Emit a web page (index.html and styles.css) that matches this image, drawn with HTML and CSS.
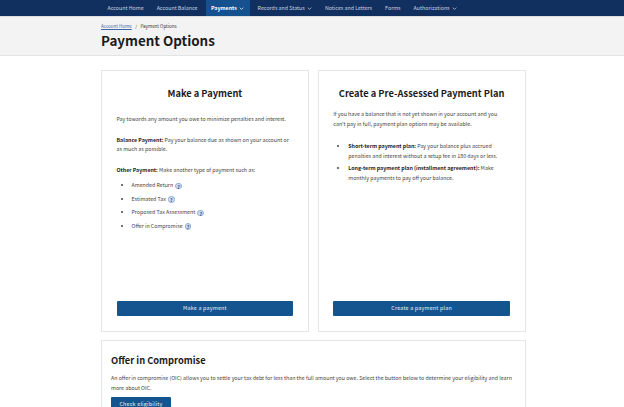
FILE: index.html
```html
<!DOCTYPE html>
<html lang="en">
<head>
<meta charset="utf-8">
<title>Payment Options</title>
<link rel="stylesheet" href="styles.css">
</head>
<body>
<nav class="nav">
  <a class="nav-item">Account Home</a>
  <a class="nav-item">Account Balance</a>
  <a class="nav-item active">Payments <svg class="chev" viewBox="0 0 8 5"><path d="M1 1l3 3 3-3" fill="none" stroke="currentColor" stroke-width="1.2"/></svg></a>
  <a class="nav-item">Records and Status <svg class="chev" viewBox="0 0 8 5"><path d="M1 1l3 3 3-3" fill="none" stroke="currentColor" stroke-width="1.2"/></svg></a>
  <a class="nav-item">Notices and Letters</a>
  <a class="nav-item">Forms</a>
  <a class="nav-item">Authorizations <svg class="chev" viewBox="0 0 8 5"><path d="M1 1l3 3 3-3" fill="none" stroke="currentColor" stroke-width="1.2"/></svg></a>
</nav>
<header class="head">
  <div class="crumbs"><a class="crumb-link">Account Home</a><span class="sep">/</span><span>Payment Options</span></div>
  <h1>Payment Options</h1>
</header>
<main class="main">
  <div class="cols">
    <section class="card">
      <h2>Make a Payment</h2>
      <p class="intro">Pay towards any amount you owe to minimize penalties and interest.</p>
      <p class="para"><b>Balance Payment:</b> Pay your balance due as shown on your account or as much as possible.</p>
      <p class="para"><b>Other Payment:</b> Make another type of payment such as:</p>
      <ul class="help-list">
        <li>Amended Return <span class="q">?</span></li>
        <li>Estimated Tax <span class="q">?</span></li>
        <li>Proposed Tax Assessment <span class="q">?</span></li>
        <li>Offer in Compromise <span class="q">?</span></li>
      </ul>
      <a class="btn wide">Make a payment</a>
    </section>
    <section class="card">
      <h2>Create a Pre-Assessed Payment Plan</h2>
      <p class="intro2">If you have a balance that is not yet shown in your account and you can't pay in full, payment plan options may be available.</p>
      <ul class="plan-list">
        <li><b>Short-term payment plan:</b> Pay your balance plus accrued penalties and interest without a setup fee in 180 days or less.</li>
        <li><b>Long-term payment plan (installment agreement):</b> Make monthly payments to pay off your balance.</li>
      </ul>
      <a class="btn wide">Create a payment plan</a>
    </section>
  </div>
  <section class="card oic">
    <h3>Offer in Compromise</h3>
    <p class="oic-text">An offer in compromise (OIC) allows you to settle your tax debt for less than the full amount you owe. Select the button below to determine your eligibility and learn more about OIC.</p>
    <a class="btn small">Check eligibility</a>
  </section>
</main>
</body>
</html>
```
FILE: styles.css
```css
* { box-sizing: border-box; }
html, body { margin: 0; padding: 0; height: 100%; overflow: hidden; }
body {
  background: #fff;
  color: #444;
  font-family: "Noto Sans CJK SC", "Noto Sans", sans-serif;
  font-size: 5.3px;
  line-height: 9.6px;
}
b { font-weight: 700; color: #222; }
.nav {
  height: 17px;
  background: #11305f;
  display: flex;
  padding-left: 101px;
  color: #c9d3e3;
  font-size: 5.3px;
  line-height: 16px;
  border-bottom: 1px solid #dcdcdc;
}
.nav-item {
  padding: 0 6.5px;
  white-space: nowrap;
}
.nav-item.active {
  background: #15508f;
  color: #fff;
  font-weight: 700;
  padding: 0 5.5px;
  margin: 0 1.5px;
}
.chev { width: 5px; height: 3px; margin-left: 1px; vertical-align: 0; }
.head {
  background: #f3f3f3;
  height: 39px;
  padding: 5.5px 0 0 101px;
  border-bottom: 1px solid #e4e4e4;
}
.crumbs { font-size: 4.5px; line-height: 7px; color: #333; }
.crumb-link { color: #3b66a8; text-decoration: underline; }
.sep { margin: 0 3.5px; }
h1 {
  margin: 1.5px 0 0;
  font-size: 13.4px;
  line-height: 18px;
  font-weight: 700;
  color: #1b1b1b;
}
.main { padding: 14px 98.5px 0 101px; }
.cols { display: flex; gap: 9px; }
.card {
  background: #fff;
  border: 1px solid #e6e6e6;
  flex: 1;
  height: 262px;
  padding: 0 14.5px;
  display: flex;
  flex-direction: column;
}
.card h2 {
  margin: 15px 0 0;
  font-size: 9.3px;
  line-height: 14px;
  text-align: center;
  font-weight: 700;
  color: #1b1b1b;
}
.intro { margin: 15px 0 0; }
.intro2 { margin: 10px 0 0; }
.para { margin: 11px 0 0; }
.help-list { margin: 6px 0 0; padding: 0 0 0 15px; list-style: disc; }
.help-list li { height: 13.4px; line-height: 9.6px; }
.plan-list { margin: 13px 0 0; padding: 0 0 0 15px; }
.plan-list li { margin-bottom: 3px; }
.q {
  display: inline-block;
  width: 6.5px;
  height: 6.5px;
  border-radius: 50%;
  background: #d6e2f3;
  border: 0.5px solid #8fabd6;
  color: #173f80;
  font-size: 5px;
  line-height: 5.5px;
  font-weight: 700;
  text-align: center;
  margin-left: 1px;
  vertical-align: -1.5px;
}
.btn {
  display: block;
  background: #14548f;
  color: #e8eef6;
  text-align: center;
  font-size: 5.4px;
  line-height: 15px;
  height: 15.5px;
  border-radius: 1px;
  letter-spacing: 0.2px;
}
.btn.wide { margin-top: auto; margin-bottom: 15px; }
.btn.small { width: 60px; }
.card.oic {
  flex: none;
  margin-top: 8px;
  height: 80px;
  padding: 0 9px;
}
.oic h3 {
  margin: 12px 0 0;
  font-size: 9.3px;
  line-height: 14px;
  font-weight: 700;
  color: #1b1b1b;
}
.oic-text { margin: 7px 0 4px; }
```
